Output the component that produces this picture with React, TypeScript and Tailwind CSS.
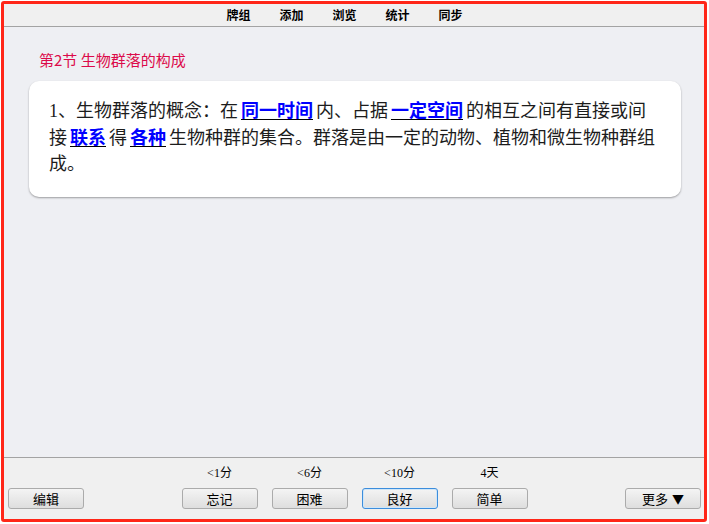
const menu = ["牌组", "添加", "浏览", "统计", "同步"];

const answers = [
  { label: "<1分", text: "忘记" },
  { label: "<6分", text: "困难" },
  { label: "<10分", text: "良好", focused: true },
  { label: "4天", text: "简单" },
];

const cjk = "font-['Noto_Sans_CJK_SC',sans-serif]";
const serifCjk = "font-['Liberation_Serif','Noto_Sans_CJK_SC',serif]";

function Btn({ children, focused }: { children: React.ReactNode; focused?: boolean }) {
  return (
    <button
      className={
        "flex h-[21px] w-[76px] items-center justify-center rounded-[3px] border bg-gradient-to-b from-[#f4f4f4] to-[#dedede] text-[13px] leading-none text-black " +
        cjk +
        (focused ? " border-[#3c8ddc] shadow-[inset_0_0_0_1px_#cfe6f8]" : " border-[#ababab]")
      }
    >
      {children}
    </button>
  );
}

function Cloze({ children }: { children: React.ReactNode }) {
  return (
    <span className="font-bold text-[#0000ff] underline decoration-black decoration-1 underline-offset-2">
      {children}
    </span>
  );
}

export default function App() {
  return (
    <div className="h-[524px] w-[709px] bg-white pl-px pr-[2px] pt-px pb-[2px]">
      <div className="flex h-full flex-col rounded-[3px] border-[3px] border-[#ff2618]">
        {/* top menu */}
        <div className={"flex h-[23px] items-center justify-center gap-[29px] border-b border-[#a3a3a3] bg-[#f0f0f0] pr-[19px] text-[12px] font-bold text-black " + cjk}>
          {menu.map((m) => (
            <span key={m}>{m}</span>
          ))}
        </div>

        {/* review area */}
        <div className="flex flex-1 flex-col bg-[#eeeff3] pl-[25px] pr-[23px] pt-[23px]">
          <div className={"pl-[10px] text-[15px] leading-[20px] text-[#dc0a4a] " + cjk}>第2节 生物群落的构成</div>
          <div
            className={
              "mt-[11px] rounded-[10px] bg-white px-[20px] pt-[17px] pb-[19px] text-[18px] leading-[26.5px] text-[#1c1c1c] shadow-[0_1px_2px_rgba(0,0,0,0.35)] [word-spacing:-1.5px] " +
              serifCjk
            }
          >
            1、生物群落的概念：在 <Cloze>同一时间</Cloze> 内、占据 <Cloze>一定空间</Cloze> 的相互之间有直接或间
            <br />
            接 <Cloze>联系</Cloze> 得 <Cloze>各种</Cloze> 生物种群的集合。群落是由一定的动物、植物和微生物种群组
            <br />
            成。
          </div>
        </div>

        {/* answer bar */}
        <div className="flex h-[62px] items-end justify-between border-t border-[#a3a3a3] bg-[#f0f0f0] pb-[10px] pl-[4px] pr-[3px]">
          <Btn>编辑</Btn>
          <div className="flex gap-[14px]">
            {answers.map((a) => (
              <div key={a.text} className="flex flex-col items-center gap-[8px]">
                <span className={"text-[12px] leading-[14px] text-black " + serifCjk}>{a.label}</span>
                <Btn focused={a.focused}>{a.text}</Btn>
              </div>
            ))}
          </div>
          <Btn>
            更多 <span className="ml-[4px] text-[12px]">▼</span>
          </Btn>
        </div>
      </div>
    </div>
  );
}
